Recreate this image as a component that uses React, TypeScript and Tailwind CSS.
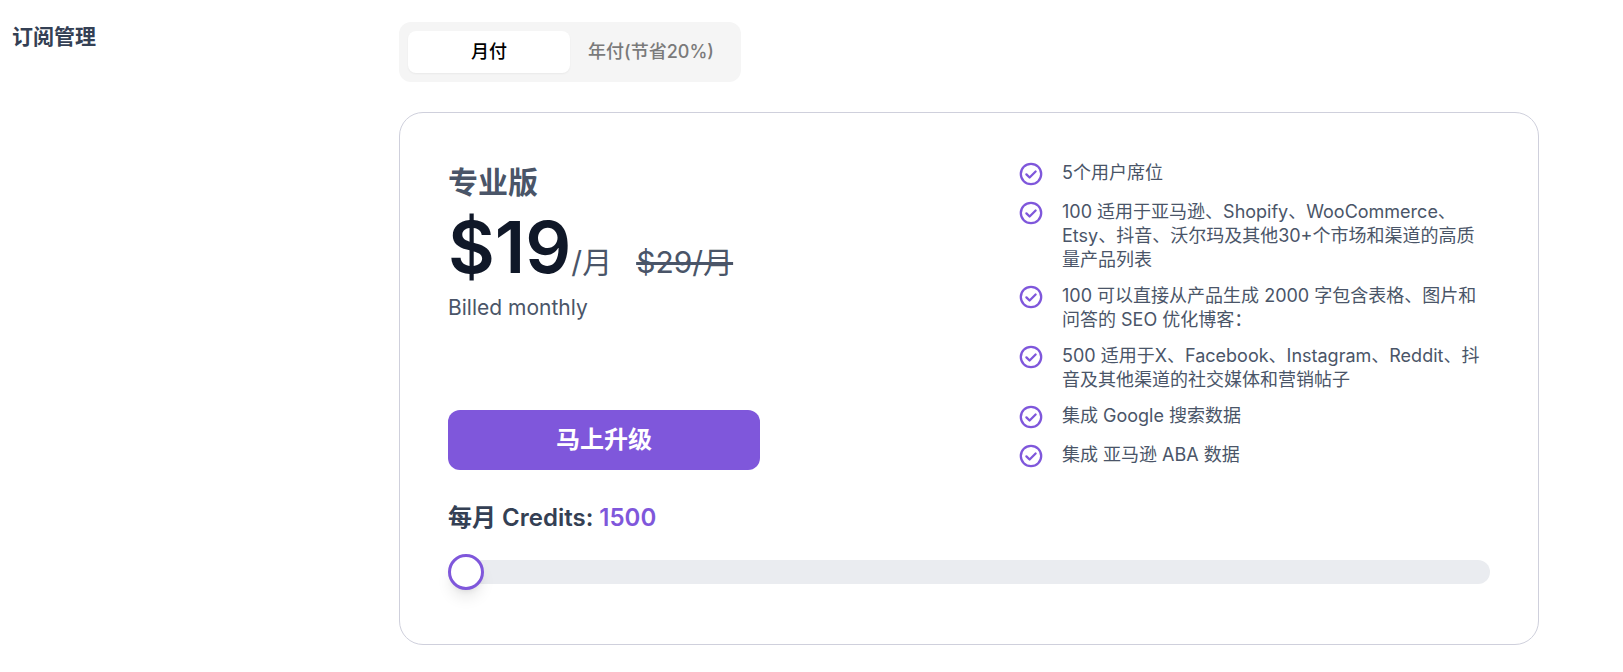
const features = [
  '5个用户席位',
  '100 适用于亚马逊、Shopify、WooCommerce、Etsy、抖音、沃尔玛及其他30+个市场和渠道的高质量产品列表',
  '100 可以直接从产品生成 2000 字包含表格、图片和问答的 SEO 优化博客：',
  '500 适用于X、Facebook、Instagram、Reddit、抖音及其他渠道的社交媒体和营销帖子',
  '集成 Google 搜索数据',
  '集成 亚马逊 ABA 数据',
]

function CheckCircle() {
  return (
    <span className="block h-[27px] w-6 shrink-0 pt-px">
      <svg viewBox="0 0 24 24" className="h-6 w-6 text-[#7f57db]" fill="none" stroke="currentColor" strokeWidth="2.3">
        <circle cx="12" cy="12" r="10.2" />
        <path d="M7.4 12.4l3.2 3.1 6-6" strokeLinecap="round" strokeLinejoin="round" />
      </svg>
    </span>
  )
}

export default function App() {
  return (
    <div
      className="flex h-[672px] w-[1623px] overflow-hidden bg-white pl-3 pt-[22px]"
      style={{ fontFamily: 'Inter, "Noto Sans CJK SC", sans-serif' }}
    >
      <h2 className="w-[387px] shrink-0 text-[21px] leading-[30px] font-semibold text-[#344054]">订阅管理</h2>
      <div className="w-[1140px] shrink-0">
        <div className="flex h-[60px] w-[342px] rounded-xl bg-[#f5f5f5] p-[9px]">
          <button className="h-[42px] w-[162px] rounded-lg bg-white text-lg font-medium text-black shadow-xs">月付</button>
          <button className="h-[42px] flex-1 text-lg font-medium text-[#7a7a7a]">年付(节省20%)</button>
        </div>
        <div className="mt-[30px] rounded-3xl border border-[#cfd0dc] px-12 pb-[60px] pt-12">
          <div className="flex">
            <div className="w-[571px] shrink-0">
              <h3 className="text-[30px] leading-[42px] font-semibold text-[#4a5568]">专业版</h3>
              <div className="mt-1 flex items-baseline">
                <span className="text-[72px] leading-[80px] font-semibold text-[#101828]">$19</span>
                <span className="text-[30px] text-[#4a5568]">/月</span>
                <span className="ml-[24px] text-[30px] text-[#4a5568] line-through">$29/月</span>
              </div>
              <p className="mt-[7px] text-[21px] leading-7 text-[#4a5568]">Billed monthly</p>
              <button className="mt-[88px] h-[60px] w-[312px] rounded-xl bg-[#7f57db] text-2xl font-semibold text-white">
                马上升级
              </button>
            </div>
            <ul className="flex min-w-0 flex-1 flex-col gap-3">
              {features.map((f) => (
                <li key={f} className="flex gap-[19px] text-lg leading-6 text-[#4a5568]">
                  <CheckCircle />
                  <span className="min-w-0 flex-1">{f}</span>
                </li>
              ))}
            </ul>
          </div>
          <p className="mt-8 text-2xl leading-8 font-semibold text-[#344054]">
            每月 Credits: <span className="text-[#7f57db]">1500</span>
          </p>
          <div className="relative mt-[26px] h-6 rounded-full bg-[#eaecf0]">
            <span className="absolute -top-[6px] left-0 h-9 w-9 rounded-full border-[3px] border-[#7f57db] bg-white shadow-lg" />
          </div>
        </div>
      </div>
    </div>
  )
}
